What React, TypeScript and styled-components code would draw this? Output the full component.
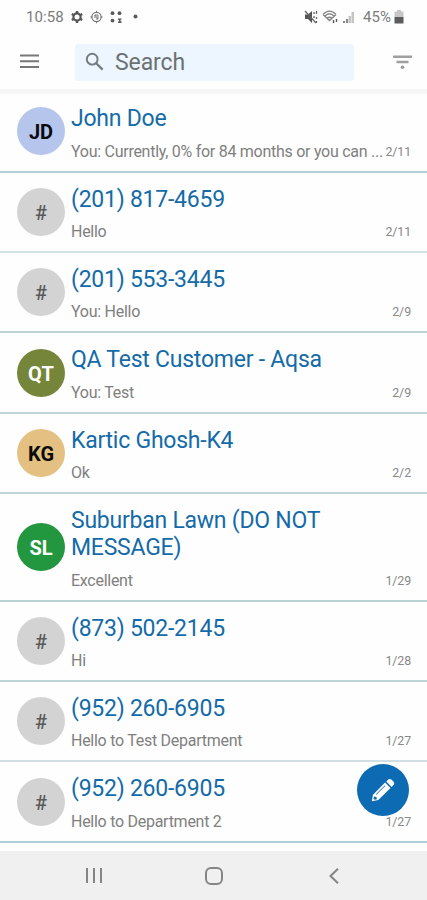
import React from "react";
import styled, { createGlobalStyle } from "styled-components";

const GlobalStyle = createGlobalStyle`
  * { box-sizing: border-box; }
  html, body { margin: 0; background: #fefefe; }
  body { font-family: Roboto, sans-serif; overflow: hidden; }
`;

const Screen = styled.div`
  position: relative;
  width: 427px;
  height: 900px;
  display: flex;
  flex-direction: column;
  overflow: hidden;
  background: #fefefe;
`;

const StatusBar = styled.div`
  height: 34px;
  padding: 0 23px 0 26px;
  display: flex;
  justify-content: space-between;
  flex: none;
`;

const StatusGroup = styled.div`
  display: flex;
  align-items: center;
  height: 34px;
`;

const StatusText = styled.span<{ $width: number }>`
  width: ${(p) => p.$width}px;
  font-size: 15px;
  letter-spacing: 0.1px;
  color: #7c7c7c;
  white-space: nowrap;
`;

const Header = styled.header`
  height: 56px;
  flex: none;
  padding: 0 13px 0 19px;
  display: flex;
  align-items: center;
`;

const SearchBox = styled.div`
  width: 279px;
  height: 37px;
  margin: 0 38px 0 35px;
  padding-left: 9px;
  display: flex;
  align-items: center;
  background: #edf6fe;
  border-radius: 3px;
`;

const SearchLabel = styled.span`
  margin: 2px 0 0 9px;
  font-size: 23px;
  letter-spacing: -0.1px;
  line-height: 28px;
  color: #6c7174;
`;

const Icon = styled.svg`
  display: block;
  flex: none;
  overflow: visible;
`;

const List = styled.main`
  flex: 1;
  border-top: 5px solid #f6f6f6;
  margin-top: -1px;
  overflow: hidden;
`;

const Row = styled.article<{ $tall?: boolean; $line: string }>`
  height: ${(p) => (p.$tall ? 107.4 : 80.4)}px;
  padding: 0 16px 0 17px;
  display: flex;
  align-items: center;
  border-bottom: 2px solid ${(p) => p.$line};

  &:first-child { height: 78.6px; }
`;

const Avatar = styled.div<{ $bg: string; $fg: string; $plain: boolean }>`
  width: 48px;
  height: 48px;
  flex: none;
  padding-top: 2px;
  display: flex;
  align-items: center;
  justify-content: center;
  border-radius: 50%;
  background: ${(p) => p.$bg};
  color: ${(p) => p.$fg};
  font-size: 20px;
  font-weight: ${(p) => (p.$plain ? 500 : 700)};

  ${Row}:first-child & { margin-bottom: 2px; }
`;

const Details = styled.div`
  flex: 1;
  min-width: 0;
  align-self: flex-end;
  padding: 0 0 8.4px 6px;
`;

const Name = styled.h2`
  margin: 0;
  max-width: 275px;
  font-size: 23px;
  letter-spacing: -0.24px;
  font-weight: 400;
  line-height: 27px;
  color: #146ba8;
`;

const MessageLine = styled.div`
  margin-top: 8px;
  display: flex;
  justify-content: space-between;
  align-items: center;
  height: 22px;
  white-space: nowrap;
`;

const Message = styled.span`
  font-size: 16px;
  letter-spacing: -0.27px;
  color: #808080;
`;

const DateText = styled.time`
  font-size: 12.4px;
  letter-spacing: -0.1px;
  color: #888;
`;

const ComposeButton = styled.button`
  position: absolute;
  left: 357px;
  top: 764px;
  width: 52px;
  height: 52px;
  padding: 0;
  border: 0;
  border-radius: 50%;
  display: grid;
  place-items: center;
  background: #0d6bb3;
`;

const NavBar = styled.nav`
  height: 49px;
  flex: none;
  display: grid;
  grid-template-columns: 120px 120px 120px;
  justify-content: center;
  align-items: center;
  justify-items: center;
  background: #f0f0f0;
`;

type Thread = {
  initials: string;
  name: string;
  message: string;
  date: string;
  bg?: string;
  fg?: string;
  tall?: boolean;
  line: string;
};

const threads: Thread[] = [
  { initials: "JD", name: "John Doe", message: "You: Currently, 0% for 84 months or you can ...", date: "2/11", bg: "#b6c5eb", fg: "#080a10", line: "#b7d0d8" },
  { initials: "#", name: "(201) 817-4659", message: "Hello", date: "2/11", line: "#d2e1e3" },
  { initials: "#", name: "(201) 553-3445", message: "You: Hello", date: "2/9", line: "#bdd4d5" },
  { initials: "QT", name: "QA Test Customer - Aqsa", message: "You: Test", date: "2/9", bg: "#75863a", fg: "#ffffff", line: "#bdd4d5" },
  { initials: "KG", name: "Kartic Ghosh-K4", message: "Ok", date: "2/2", bg: "#e4c182", fg: "#0b0a05", line: "#bdd4d5" },
  { initials: "SL", name: "Suburban Lawn (DO NOT MESSAGE)", message: "Excellent", date: "1/29", bg: "#23973f", fg: "#ffffff", tall: true, line: "#b9d2d4" },
  { initials: "#", name: "(873) 502-2145", message: "Hi", date: "1/28", line: "#bdd4d8" },
  { initials: "#", name: "(952) 260-6905", message: "Hello to Test Department", date: "1/27", line: "#cfdfe5" },
  { initials: "#", name: "(952) 260-6905", message: "Hello to Department 2", date: "1/27", line: "#b5cfd8" },
];

function NotificationIcons() {
  return (
    <Icon width="70" height="14" viewBox="0 0 70 14">
      <g fill="none" stroke="#555">
        <circle cx="6" cy="7" r="3.6" strokeWidth="2.2" />
        <path d="M6 1v2M6 11v2M.8 4l1.8 1M9.4 9l1.8 1M.8 10l1.8-1M9.4 5l1.8-1" strokeWidth="2.4" />
        <circle cx="25.5" cy="7" r="4.6" stroke="#777" strokeWidth="1.2" />
        <path d="M25.5 .8v2M25.5 11.2v2M19.3 7h2M29.7 7h2M24 5l3 4M24 8V5h3v4h-2" stroke="#777" />
      </g>
      <g fill="#5b5b5b">
        <circle cx="41.5" cy="3.2" r="1.9" /><circle cx="48.5" cy="3.2" r="1.9" />
        <circle cx="41.5" cy="10.6" r="1.9" /><path d="M47 8.5h3.5v1.3h-1v1.4h1V13H47v-1.5h1v-1.5h-1z" />
        <circle cx="64.5" cy="6.5" r="2" />
      </g>
    </Icon>
  );
}

function SignalIcons() {
  return (
    <Icon width="59" height="14" viewBox="0 0 59 14">
      <path d="M1 4.5h3L8 1v12L4 9H1z" fill="#555" />
      <path d="m1 1 11 12M10 2v2M12.5 1v3M10 6v2M12.5 7v2M12.5 11v2" stroke="#666" strokeWidth="1.3" />
      <g fill="none" stroke="#858585" strokeWidth="1.4">
        <path d="M19 4.5c4-4.5 9-4.5 13 0M21 6c3-3 6-3 9 0M19 4.5l6.5 6 6.5-6M23 8c1.5-1 3.5-1 5 0" />
        <path d="M29.5 13v-3M32.5 9v3" stroke="#555" />
      </g>
      <path d="M39 13v-2h2v2zM42 13V9h2v4z" fill="#888" />
      <path d="M44.5 13V6H47v7zM47.5 13V2H50v11z" fill="#c4c4c4" />
    </Icon>
  );
}

function BatteryIcon() {
  return (
    <Icon width="10" height="14" viewBox="0 0 10 14">
      <path d="M3 0h4v1.5h2.5V7H.5V1.5H3z" fill="#c7c7c7" />
      <path d="M.5 7h9v6.5h-9z" fill="#5c5c5c" />
    </Icon>
  );
}

function MenuIcon() {
  return (
    <Icon width="21" height="16" viewBox="0 0 21 16">
      <path d="M1 1.5h19M1 7.2h19M1 13h19" stroke="#777" strokeWidth="1.9" />
    </Icon>
  );
}

function SearchIcon() {
  return (
    <Icon width="22" height="22" viewBox="0 0 22 22">
      <circle cx="8.2" cy="8.2" r="5.4" fill="none" stroke="#747a7e" strokeWidth="1.9" />
      <path d="m12.2 12.2 6.4 6.4" stroke="#747a7e" strokeWidth="2.2" />
    </Icon>
  );
}

function FilterIcon() {
  return (
    <Icon width="21" height="16" viewBox="0 0 21 16">
      <path d="M1 2.8h19M4.5 8h12" stroke="#a0a0a0" strokeWidth="2.4" />
      <circle cx="10.5" cy="13.2" r="1.8" fill="#999" />
    </Icon>
  );
}

function PencilIcon() {
  return (
    <Icon width="24" height="24" viewBox="0 0 24 24">
      <path fillRule="evenodd" d="M.8 23.3 2 16.8 14.1 4.6l5.4 5.5L7.3 22.1zM3 18.4l-.5 2.2 1.1 1.1 2.2-.5-.3-2.1z" fill="#fff" />
      <path d="m15.3 3.5 2-2q1.7-1.3 3.3.2l2 2q1.5 1.7.1 3.1L20.6 9z" fill="#fff" />
      <path d="m5.2 16.4 8.8-8.7" stroke="#0d6bb3" strokeWidth="1" />
    </Icon>
  );
}

export default function App() {
  return (
    <>
      <GlobalStyle />
      <Screen>
        <StatusBar>
          <StatusGroup>
            <StatusText $width={45}>10:58</StatusText>
            <NotificationIcons />
          </StatusGroup>
          <StatusGroup>
            <SignalIcons />
            <StatusText $width={31}>45%</StatusText>
            <BatteryIcon />
          </StatusGroup>
        </StatusBar>
        <Header>
          <MenuIcon />
          <SearchBox>
            <SearchIcon />
            <SearchLabel>Search</SearchLabel>
          </SearchBox>
          <FilterIcon />
        </Header>
        <List>
          {threads.map((t, i) => (
            <Row key={i} $tall={t.tall} $line={t.line}>
              <Avatar $bg={t.bg ?? "#d3d3d3"} $fg={t.fg ?? "#5a5a5a"} $plain={!t.bg}>{t.initials}</Avatar>
              <Details>
                <Name>{t.name}</Name>
                <MessageLine>
                  <Message>{t.message}</Message>
                  <DateText>{t.date}</DateText>
                </MessageLine>
              </Details>
            </Row>
          ))}
        </List>
        <ComposeButton aria-label="Compose message"><PencilIcon /></ComposeButton>
        <NavBar>
          <Icon width="18" height="18" viewBox="0 0 18 18">
            <path d="M2 1v15M9 1v15M16 1v15" stroke="#858585" strokeWidth="2" />
          </Icon>
          <Icon width="18" height="18" viewBox="0 0 18 18">
            <rect x="1" y="1" width="16" height="16" rx="5" fill="none" stroke="#858585" strokeWidth="2" />
          </Icon>
          <Icon width="10" height="16" viewBox="0 0 10 16">
            <path d="M9 .8 1.5 8 9 15.2" fill="none" stroke="#858585" strokeWidth="2" />
          </Icon>
        </NavBar>
      </Screen>
    </>
  );
}
